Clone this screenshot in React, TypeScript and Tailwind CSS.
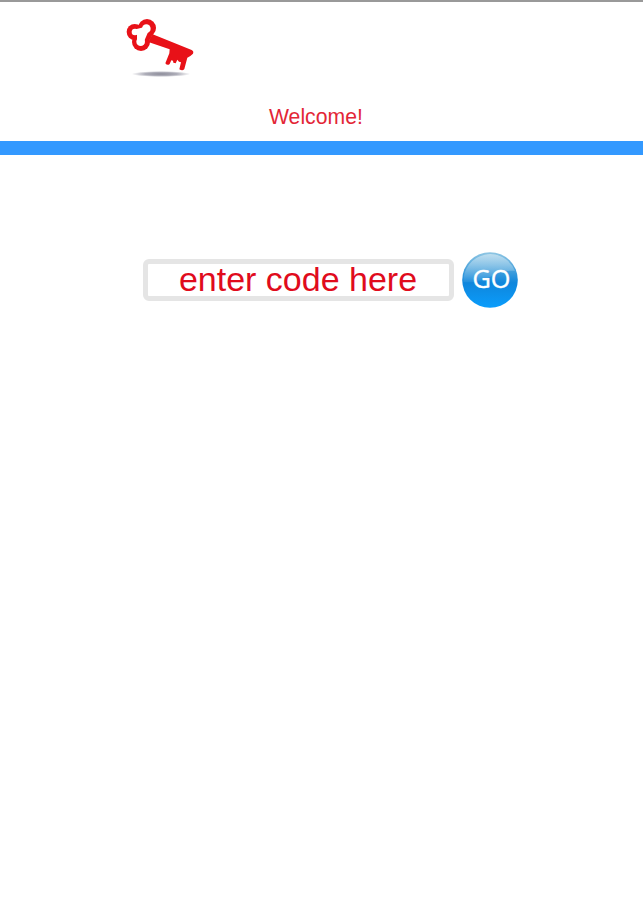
import React, { useState } from 'react';

const KeyLogo: React.FC = () => (
    <svg viewBox="0 0 270 225" className="w-[90px] h-[75px]" role="img" aria-label="Key">
        <defs>
            <radialGradient id="keyShadow">
                <stop offset="0%" stopColor="#8b8b98" />
                <stop offset="55%" stopColor="#adadb8" />
                <stop offset="100%" stopColor="#ffffff" />
            </radialGradient>
        </defs>
        <ellipse cx="138" cy="192" rx="88" ry="9" fill="url(#keyShadow)" />
        {/* Shaft and teeth */}
        <path
            d="M113 73 L230 120 Q237 124 234 131 L226 138 L217 143 L208 177 Q203 184 193 178 L198 157 L192 155 L187 149 L182 160 L175 158 L174 152 L169 151 L164 162 Q157 168 151 160 L163 130 L164 118 L100 96 Z"
            fill="#e81118"
        />
        {/* Bow: three overlapping lobes with the middle cut out */}
        <g fill="#e81118">
            <circle cx="59" cy="66" r="24" />
            <circle cx="96" cy="54" r="27" />
            <circle cx="78" cy="96" r="27" />
            <circle cx="97" cy="77" r="14" />
        </g>
        <g fill="#ffffff">
            <circle cx="60" cy="66" r="10" />
            <circle cx="94" cy="56" r="13" />
            <circle cx="77" cy="95" r="13" />
            <path d="M62 58 L86 52 L99 67 L88 92 L66 92 L66 75 Z" />
        </g>
    </svg>
);

const GoButton: React.FC<{ onClick: () => void }> = ({ onClick }) => (
    <button type="button" onClick={onClick} className="w-[58px] h-[58px] shrink-0 cursor-pointer">
        <svg viewBox="0 0 58 58" className="w-full h-full">
            <defs>
                <linearGradient id="goBase" x1="0" y1="0" x2="0" y2="1">
                    <stop offset="0%" stopColor="#8fc6e3" />
                    <stop offset="30%" stopColor="#4aa3dc" />
                    <stop offset="55%" stopColor="#0f86dc" />
                    <stop offset="100%" stopColor="#0a9dfc" />
                </linearGradient>
                <linearGradient id="goShine" x1="0" y1="0" x2="0" y2="1">
                    <stop offset="0%" stopColor="#ffffff" stopOpacity="0.45" />
                    <stop offset="100%" stopColor="#ffffff" stopOpacity="0.06" />
                </linearGradient>
            </defs>
            <circle cx="29" cy="29" r="27.8" fill="url(#goBase)" />
            <path d="M2.5 31 A26.7 26.7 0 0 1 54 20 C44 19 37 22 29 26 C20 30 12 32 2.5 31 Z" fill="url(#goShine)" />
            <text
                x="30.5"
                y="36.5"
                textAnchor="middle"
                textLength="38"
                lengthAdjust="spacingAndGlyphs"
                fill="#ffffff"
                stroke="#ffffff"
                strokeWidth="0.4"
                className="font-['Open_Sans',sans-serif] text-[25px] font-medium"
            >
                GO
            </text>
        </svg>
    </button>
);

export default function App() {
    const [code, setCode] = useState('');

    return (
        <div className="min-h-screen bg-white border-t-2 border-[#999999] font-['Liberation_Sans',Arial,sans-serif]">
            <header className="h-[153px] border-b-[14px] border-[#3399ff]">
                <div className="pl-[115px] pt-2">
                    <KeyLogo />
                </div>
                <h1 className="pl-[269px] pt-5 text-[21.2px] leading-6 text-[#e32636]">Welcome!</h1>
            </header>

            <main className="flex items-center gap-[7px] pl-[143px] pt-24">
                <input
                    type="text"
                    value={code}
                    onChange={(e) => setCode(e.target.value)}
                    placeholder="enter code here"
                    className="w-[311px] h-[42px] rounded-[6px] border-[5px] border-[#e5e5e5] bg-white pr-px pb-[2px] text-center text-[34px] leading-8 text-[#e00b1c] placeholder:text-[#e00b1c] placeholder:opacity-100 focus:outline-none"
                />
                <GoButton onClick={() => setCode('')} />
            </main>
        </div>
    );
}
